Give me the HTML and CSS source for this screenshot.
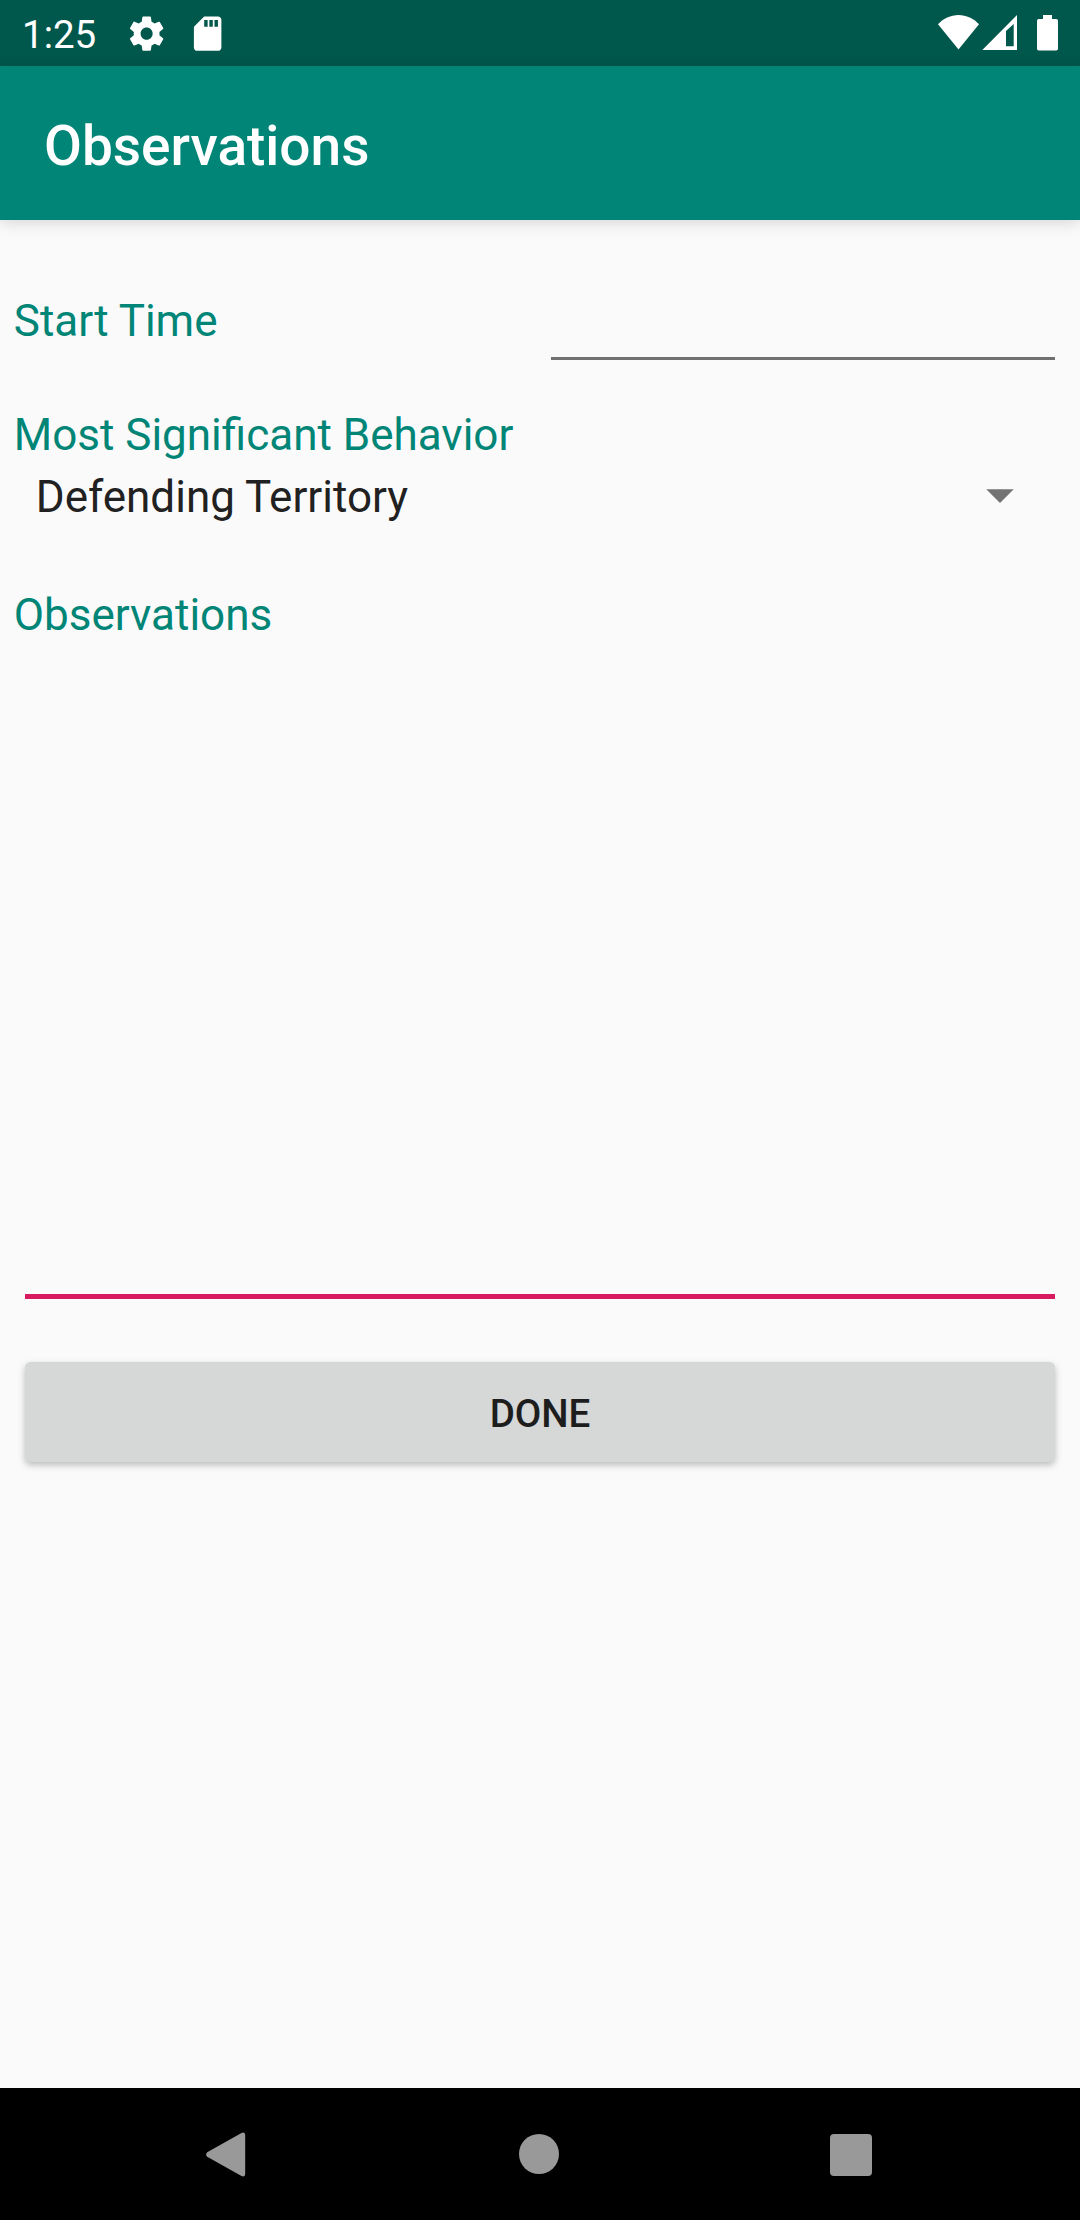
FILE: index.html
```html
<!DOCTYPE html>
<html lang="en">
<head>
<meta charset="utf-8">
<title>Observations</title>
<link rel="stylesheet" href="styles.css">
</head>
<body>
<div class="screen">
  <div class="status-bar">
    <span class="clock">1:25</span>
    <svg class="gear" viewBox="0 0 24 24"><path d="M19.43 12.98c.04-.32.07-.64.07-.98s-.03-.66-.07-.98l2.11-1.65c.19-.15.24-.42.12-.64l-2-3.46c-.12-.22-.39-.3-.61-.22l-2.49 1c-.52-.4-1.08-.73-1.69-.98l-.38-2.65C14.46 2.18 14.25 2 14 2h-4c-.25 0-.46.18-.49.42l-.38 2.65c-.61.25-1.17.59-1.69.98l-2.49-1c-.23-.09-.49 0-.61.22l-2 3.46c-.13.22-.07.49.12.64l2.11 1.65c-.04.32-.07.65-.07.98s.03.66.07.98l-2.11 1.65c-.19.15-.24.42-.12.64l2 3.46c.12.22.39.3.61.22l2.49-1c.52.4 1.08.73 1.69.98l.38 2.65c.03.24.24.42.49.42h4c.25 0 .46-.18.49-.42l.38-2.65c.61-.25 1.17-.59 1.69-.98l2.49 1c.23.09.49 0 .61-.22l2-3.46c.12-.22.07-.49-.12-.64l-2.11-1.65zM12 15.5c-1.93 0-3.5-1.57-3.5-3.5s1.57-3.5 3.5-3.5 3.5 1.57 3.5 3.5-1.57 3.5-3.5 3.5z"/></svg>
    <svg class="sd-card" viewBox="0 0 24 24"><path d="M18 2h-8L4.02 8 4 20c0 1.1.9 2 2 2h12c1.1 0 2-.9 2-2V4c0-1.1-.9-2-2-2zm-6 6h-2V4h2v4zm3 0h-2V4h2v4zm3 0h-2V4h2v4z"/></svg>
    <svg class="signals" viewBox="0 0 122 36">
      <path d="M0 9.2C5.500 3.500 12.700 0 20.500 0S35.500 3.500 41 9.200L20.500 34.500z"/>
      <path fill-rule="evenodd" d="M79 0V35H44.300zM68 16V31.300H75.700V9z"/>
      <path d="M105 0h9v4h4.200q1.800 0 1.800 1.800v28q0 1.800-1.800 1.800h-17.400q-1.800 0-1.800-1.800v-28q0-1.800 1.800-1.800h4.200z"/>
    </svg>
  </div>
  <header class="app-bar"><h1 class="title">Observations</h1></header>
  <main class="form">
    <div class="time-row">
      <label class="label" for="start">Start Time</label>
      <input class="time-input" id="start" type="text">
    </div>
    <div class="label behavior-label">Most Significant Behavior</div>
    <div class="spinner">
      <span>Defending Territory</span>
      <svg class="caret" viewBox="0 0 28 14"><path d="M.3.300H27.700L14 14z"/></svg>
    </div>
    <label class="label notes-label" for="notes">Observations</label>
    <textarea class="notes" id="notes"></textarea>
    <button class="done" type="button">DONE</button>
  </main>
  <nav class="nav-bar">
    <svg class="back" viewBox="0 0 40 46"><path d="M1.200 20.200 35.500.9Q39.200-.4 39.200 3.500V41.500Q39.200 45.400 35.500 44.100L1.200 24.800Q-1 22.500 1.200 20.200z"/></svg>
    <span class="home"></span>
    <span class="recents"></span>
  </nav>
</div>
</body>
</html>
```

FILE: styles.css
```css
* { box-sizing: border-box; }

body {
  margin: 0;
  background: #fafafa;
  font-family: Roboto, sans-serif;
}

.screen {
  display: flex;
  flex-direction: column;
  width: 1080px;
  height: 2220px;
  overflow: hidden;
}

.status-bar {
  display: flex;
  align-items: flex-start;
  height: 66px;
  padding: 13px 20px 0 22px;
  background: #00574b;
  color: #fff;
}

.status-bar svg { fill: #fff; }

.clock {
  width: 104px;
  margin-top: -1px;
  font-size: 38.5px;
  line-height: 45px;
}

.gear, .sd-card {
  width: 41.25px;
  height: 41.25px;
}

.sd-card { margin-left: 19.5px; }

.signals {
  width: 122px;
  height: 36px;
  margin: 2px 0 0 auto;
}

.app-bar {
  height: 154px;
  padding: 48px 44px 0;
  background: #008577;
  color: #fff;
  box-shadow: 0 3px 14px rgba(0, 0, 0, 0.14);
}

.title {
  margin: 0;
  font-size: 55px;
  font-weight: 500;
  line-height: 64px;
}

.form {
  display: flex;
  flex: 1;
  flex-direction: column;
  padding: 75px 25px 0 13.75px;
  font-size: 44px;
  line-height: 52px;
}

.label { color: #008577; }

.time-row {
  display: flex;
  justify-content: space-between;
  height: 65px;
}

.time-input {
  width: 504px;
  height: 65px;
  padding: 0;
  border: 0;
  border-bottom: 3px solid #757575;
  border-image: linear-gradient(#a5a5a5 33.300%, #707070 33.400%) 3;
  outline: 0;
  background: transparent;
  font: inherit;
}

.behavior-label { margin-top: 49px; }

.spinner {
  display: flex;
  justify-content: space-between;
  margin-top: 10px;
  padding: 0 41px 0 22px;
  color: #212121;
}

.caret {
  width: 28px;
  height: 14px;
  margin-top: 18px;
  fill: #737373;
}

.notes-label { margin-top: 66px; }

.notes {
  height: 658px;
  margin: 0 0 0 11.25px;
  padding: 0;
  border: 0;
  border-bottom: 5px solid #d81b60;
  outline: 0;
  background: transparent;
  font: inherit;
  resize: none;
}

.done {
  height: 100px;
  margin: 63px 0 0 11.25px;
  padding: 2px 0 0;
  border: 0;
  border-radius: 5.5px;
  background: #d6d7d7;
  box-shadow: 0 3px 7px rgba(0, 0, 0, 0.25);
  color: #1d1d1d;
  font: 500 38.5px/45px Roboto, sans-serif;
}

.nav-bar {
  display: flex;
  align-items: flex-start;
  justify-content: space-between;
  height: 132px;
  padding: 44px 208px 0 206px;
  background: #000;
}

.back {
  width: 40px;
  height: 46px;
  fill: #999;
}

.home {
  width: 40px;
  height: 40px;
  margin: 2px 0 0 2px;
  border-radius: 50%;
  background: #999;
}

.recents {
  width: 42px;
  height: 42px;
  margin-top: 2px;
  border-radius: 4px;
  background: #999;
}
```
